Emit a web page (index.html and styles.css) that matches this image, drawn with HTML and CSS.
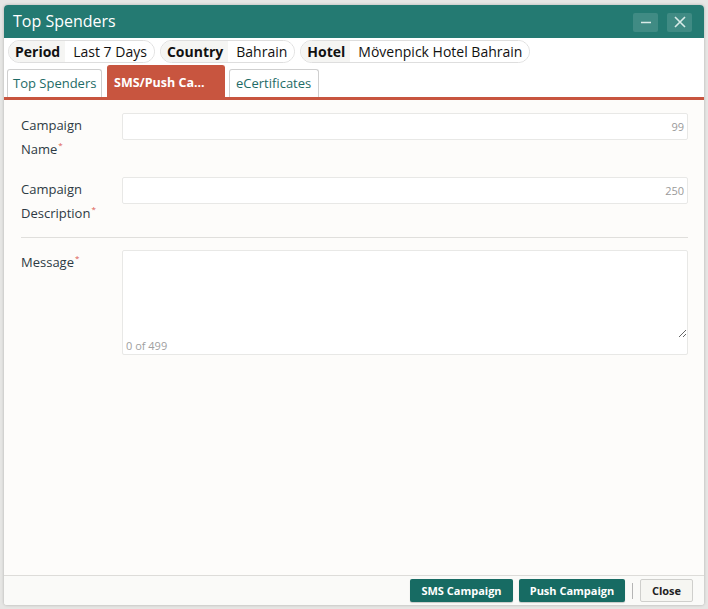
FILE: index.html
```html
<!DOCTYPE html>
<html>
<head>
<meta charset="utf-8">
<link rel="stylesheet" href="styles.css">
</head>
<body>
<div class="dialog">
  <div class="titlebar">
    <div class="title">Top Spenders</div>
    <div class="tb-buttons">
      <button class="tb-btn" aria-label="Minimize"><svg width="12" height="12" viewBox="0 0 12 12"><path d="M1 6.5h10" stroke="#d9ebe8" stroke-width="1.6"/></svg></button>
      <button class="tb-btn" aria-label="Close"><svg width="14" height="14" viewBox="0 0 14 14"><path d="M2 2l10 10M12 2L2 12" stroke="#d9ebe8" stroke-width="1.6"/></svg></button>
    </div>
  </div>
  <div class="chips">
    <div class="chip"><span class="chip-label">Period</span><span class="chip-value">Last 7 Days</span></div>
    <div class="chip"><span class="chip-label">Country</span><span class="chip-value">Bahrain</span></div>
    <div class="chip"><span class="chip-label">Hotel</span><span class="chip-value">Mövenpick Hotel Bahrain</span></div>
  </div>
  <div class="tabs">
    <div class="tab tab-1">Top Spenders</div>
    <div class="tab tab-active">SMS/Push Ca...</div>
    <div class="tab tab-3">eCertificates</div>
  </div>
  <div class="content">
    <div class="row">
      <div class="label">Campaign<br>Name<span class="req">*</span></div>
      <div class="input"><span class="count">99</span></div>
    </div>
    <div class="row row-2">
      <div class="label">Campaign<br>Description<span class="req">*</span></div>
      <div class="input"><span class="count">250</span></div>
    </div>
    <div class="divider"></div>
    <div class="row">
      <div class="label">Message<span class="req">*</span></div>
      <div class="textbox">
        <textarea class="ta"></textarea>
        <div class="ta-count">0 of 499</div>
      </div>
    </div>
  </div>
  <div class="footer">
    <button class="btn btn-primary btn-sms">SMS Campaign</button>
    <button class="btn btn-primary btn-push">Push Campaign</button>
    <span class="sep"></span>
    <button class="btn btn-close">Close</button>
  </div>
</div>
</body>
</html>
```
FILE: styles.css
```css
html, body {
  margin: 0;
  padding: 0;
}
body {
  background: #e6e6e4;
  width: 708px;
  height: 609px;
  overflow: hidden;
  font-family: "Open Sans", "Noto Sans", sans-serif;
}
.dialog {
  margin: 5px 0 0 4px;
  width: 700px;
  height: 600px;
  background: #fdfcfa;
  border-radius: 4px 4px 3px 3px;
  box-shadow: 0 0 3px rgba(0,0,0,0.25);
  display: flex;
  flex-direction: column;
  overflow: hidden;
}
.titlebar {
  height: 33px;
  background: #247a72;
  display: flex;
  align-items: center;
  justify-content: space-between;
  padding: 0 12px 0 9px;
  flex: none;
}
.title {
  color: #ffffff;
  font-size: 16px;
  line-height: 33px;
}
.tb-buttons {
  display: flex;
  gap: 9px;
  padding-top: 1px;
}
.tb-btn {
  width: 25px;
  height: 19px;
  border: none;
  border-radius: 2px;
  background: rgba(255,255,255,0.13);
  padding: 0;
  display: flex;
  align-items: center;
  justify-content: center;
}
.chips {
  display: flex;
  gap: 5px;
  padding: 2px 0 0 4px;
  height: 23px;
  flex: none;
  background: #ffffff;
}
.chip {
  display: flex;
  height: 21px;
  border: 1px solid #dedede;
  border-radius: 12px;
  overflow: hidden;
  font-size: 14px;
  line-height: 21px;
  color: #111;
  white-space: nowrap;
}
.chip-label {
  font-weight: 700;
  background: #f5f5f3;
  padding: 0 5px 0 6px;
}
.chip-value {
  background: #ffffff;
  padding: 0 7px 0 8px;
}
.tabs {
  display: flex;
  align-items: flex-end;
  padding: 0 0 0 3px;
  height: 34px;
  flex: none;
  background: #ffffff;
  border-bottom: 3px solid #c8553f;
}
.tab {
  height: 27px;
  border: 1px solid #cfcfcf;
  border-bottom: none;
  border-radius: 3px 3px 0 0;
  font-size: 13px;
  line-height: 27px;
  color: #1e6b66;
  padding: 0 5px;
  background: #ffffff;
  white-space: nowrap;
  overflow: hidden;
}
.tab-1 { width: 83px; }
.tab-active {
  margin-left: 5px;
  width: 104px;
  height: 31px;
  line-height: 33px;
  background: #c8553f;
  border-color: #c8553f;
  color: #ffffff;
  font-weight: 700;
  font-size: 12.5px;
  padding: 0 6px;
}
.tab-3 {
  margin-left: 4px;
  width: 77px;
  padding: 0 5px 0 6px;
}
.content {
  flex: 1;
  padding: 13px 16px 0 17px;
}
.row {
  display: flex;
  align-items: flex-start;
}
.row-2 {
  margin-top: 16px;
}
.label {
  width: 101px;
  flex: none;
  font-size: 13px;
  line-height: 24px;
  color: #2d3a44;
}
.req {
  color: #dc5a50;
  font-size: 8px;
  vertical-align: top;
  line-height: 16px;
  margin-left: 1px;
}
.input {
  flex: 1;
  height: 25px;
  border: 1px solid #e8e8e6;
  border-radius: 2px;
  background: #ffffff;
  display: flex;
  align-items: center;
  justify-content: flex-end;
  padding-right: 3px;
}
.count {
  font-size: 11px;
  color: #9a9a9a;
}
.divider {
  height: 1px;
  background: #e0dfdc;
  margin: 12px 0 12px;
}
.textbox {
  flex: 1;
  height: 103px;
  border: 1px solid #e8e8e6;
  border-radius: 2px;
  background: #ffffff;
  display: flex;
  flex-direction: column;
}
.ta {
  flex: 1;
  border: none;
  outline: none;
  margin: 0;
  padding: 0;
  resize: vertical;
  background: transparent;
  display: block;
  width: 100%;
}
.ta-count {
  font-size: 11px;
  color: #a0a0a0;
  padding: 0 0 0 3px;
  line-height: 16px;
  height: 16px;
}
.footer {
  flex: none;
  height: 29px;
  border-top: 1px solid #dddcd9;
  background: #fafaf8;
  display: flex;
  justify-content: flex-end;
  align-items: center;
  padding-right: 11px;
  gap: 6px;
}
.btn {
  height: 23px;
  font-family: "Open Sans", "Noto Sans", sans-serif;
  font-size: 11px;
  font-weight: 700;
  border-radius: 2px;
  padding: 0;
  cursor: pointer;
  white-space: nowrap;
}
.btn-primary {
  background: #176b63;
  color: #ffffff;
  border: none;
  box-shadow: 0 1px 1px rgba(0,0,0,0.2);
}
.btn-sms { width: 103px; }
.btn-push { width: 106px; }
.sep {
  width: 1px;
  height: 16px;
  background: #b5b5b5;
  margin: 0 1px;
}
.btn-close {
  width: 53px;
  background: #f6f6f2;
  border: 1px solid #cfcfcc;
  color: #222;
}
```
